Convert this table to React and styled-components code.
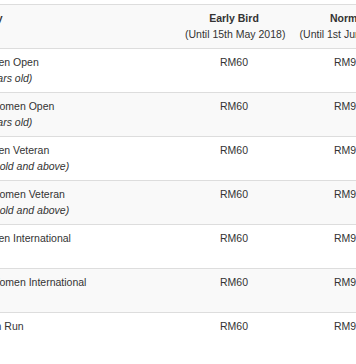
import React from "react";
import styled, { createGlobalStyle } from "styled-components";

const GlobalStyle = createGlobalStyle`
  html, body {
    margin: 0;
    padding: 0;
    overflow: hidden;
    background: #fff;
  }
  body {
    font-family: "Liberation Sans", Arial, Helvetica, sans-serif;
    color: #333;
  }
`;

const Wrapper = styled.div`
  padding-top: 4px;
  margin-left: -55px;
  width: 520px;
`;

const Row = styled.div`
  display: grid;
  grid-template-columns: 232px 114px 114px 60px;
  height: 44px;
  box-sizing: border-box;
  border-top: 1px solid #dddddd;
  background: ${({ striped }) => (striped ? "#f9f9f9" : "#fff")};
`;

const Cell = styled.div`
  padding: 6px 8px 0 ${({ indent }) => (indent ? "12px" : "8px")};
  font-size: 10.5px;
  line-height: 15.75px;
  text-align: ${({ center }) => (center ? "center" : "left")};
  white-space: nowrap;
  overflow: hidden;
`;

const Line = styled.div`
  font-weight: ${({ bold }) => (bold ? 700 : "inherit")};
  font-style: ${({ italic }) => (italic ? "italic" : "normal")};
`;

const rows = [
  { name: "21KM - Men Open", note: "(18-39 years old)" },
  { name: "21KM - Women Open", note: "(18-39 years old)" },
  { name: "21KM - Men Veteran", note: "(40 years old and above)" },
  { name: "21KM - Women Veteran", note: "(40 years old and above)" },
  { name: "21KM - Men International" },
  { name: "21KM - Women International" },
  { name: "10KM  Fun Run" },
];

export default function App() {
  return (
    <>
      <GlobalStyle />
      <Wrapper>
        <Row striped>
          <Cell indent>
            <Line bold>Category</Line>
          </Cell>
          <Cell center>
            <Line bold>Early Bird</Line>
            <Line>(Until 15th May 2018)</Line>
          </Cell>
          <Cell center>
            <Line bold>Normal</Line>
            <Line>(Until 1st June 2018)</Line>
          </Cell>
          <Cell />
        </Row>
        {rows.map((r, i) => (
          <Row key={r.name} striped={i % 2 === 1}>
            <Cell>
              <Line>{r.name}</Line>
              {r.note && <Line italic>{r.note}</Line>}
            </Cell>
            <Cell center>RM60</Cell>
            <Cell center>RM90</Cell>
            <Cell />
          </Row>
        ))}
      </Wrapper>
    </>
  );
}
